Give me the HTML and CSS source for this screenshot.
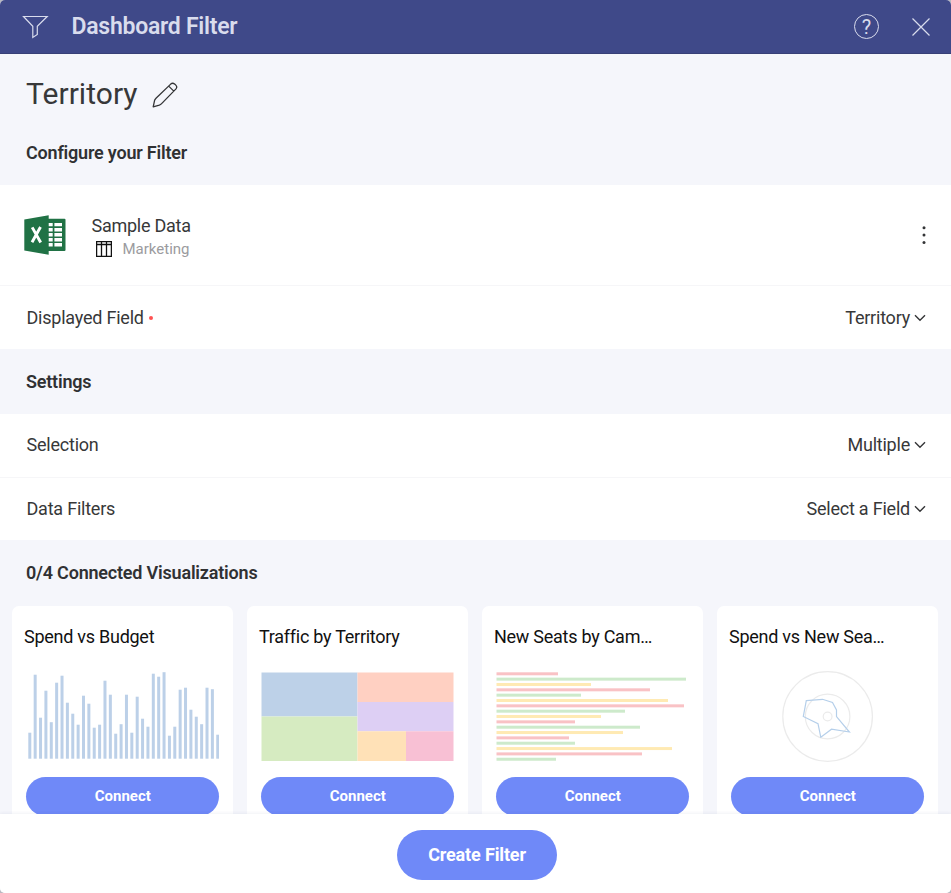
FILE: index.html
```html
<!DOCTYPE html>
<html lang="en">
<head>
<meta charset="utf-8">
<title>Dashboard Filter</title>
<link rel="stylesheet" href="styles.css">
</head>
<body>
<div class="dialog">
  <header class="topbar">
    <svg class="funnel" width="28" height="26" viewBox="0 0 28 26"><path d="M2.5 2.5H26.2L16.3 12.3V20.5L11.8 23.5V12.3Z"/></svg>
    <h1 class="topbar-title">Dashboard Filter</h1>
    <div class="help"><span class="help-mark">?</span></div>
    <svg class="close" width="20" height="20" viewBox="0 0 20 20"><path d="M1.5 1.5L18.5 18.5M18.5 1.5L1.5 18.5"/></svg>
  </header>

  <main class="content">
    <div class="name-row">
      <h2 class="filter-name">Territory</h2>
      <svg class="pencil" width="26" height="26" viewBox="0 0 26 26"><path d="M1.2 24.8L2.6 18.3Q3 17.2 4 16.2L18.7 2.1Q20.6 .4 22.9 2.2L23.8 3.1Q25.6 5 24 6.9L9.6 21.6Q8.6 22.7 7.3 23.1ZM16.7 4.1L21.8 9.1"/></svg>
    </div>
    <h3 class="section section-configure">Configure your Filter</h3>

    <div class="source">
      <svg class="excel" width="42" height="40" viewBox="0 0 42 40">
        <rect x="23" y="3.7" width="18.5" height="32.3" rx="1" fill="#207245"/>
        <path fill="#207245" d="M0.3 4.5L24.7.3V39.7L.3 35.5Z"/>
        <path fill="#fff" d="M24.7 8h4v3.3h-4zM30.4 8h7.6v3.3h-7.6zM24.7 13.1h4v3.3h-4zM30.4 13.1h7.6v3.3h-7.6zM24.7 18.1h4v3.3h-4zM30.4 18.1h7.6v3.3h-7.6zM24.7 23.1h4v3.3h-4zM30.4 23.1h7.6v3.3h-7.6zM24.7 28.1h4v3.3h-4zM30.4 28.1h7.6v3.3h-7.6z"/>
        <path fill="none" stroke="#fff" stroke-width="2.9" d="M8.2 12.4L16.7 27.5M16.5 12L8 27.3"/>
      </svg>
      <div class="source-text">
        <div class="source-name">Sample Data</div>
        <div class="source-sheet">
          <svg class="grid-icon" width="16" height="16" viewBox="0 0 16 16"><path d="M.6 .6H15.4V15.4H.6ZM.6 3.5H15.4M5.5 .6V15.3M10.5 .6V15.3"/></svg>
          <span>Marketing</span>
        </div>
      </div>
      <svg class="more" width="6" height="20" viewBox="0 0 6 20"><circle cx="3" cy="2.8" r="1.5"/><circle cx="3" cy="10.1" r="1.5"/><circle cx="3" cy="17.4" r="1.5"/></svg>
    </div>

    <div class="row">
      <span class="label">Displayed Field</span><i class="required"></i>
      <span class="value">Territory</span><svg class="chevron" width="12" height="8" viewBox="0 0 12 8"><path d="M1 1.3L6 6.2L11 1.3"/></svg>
    </div>
    <h3 class="section">Settings</h3>
    <div class="row">
      <span class="label">Selection</span>
      <span class="value">Multiple</span><svg class="chevron" width="12" height="8" viewBox="0 0 12 8"><path d="M1 1.3L6 6.2L11 1.3"/></svg>
    </div>
    <div class="row">
      <span class="label">Data Filters</span>
      <span class="value">Select a Field</span><svg class="chevron" width="12" height="8" viewBox="0 0 12 8"><path d="M1 1.3L6 6.2L11 1.3"/></svg>
    </div>
    <h3 class="section section-connected">0/4 Connected Visualizations</h3>

    <div class="cards">
      <article class="card">
        <h4 class="card-title">Spend vs Budget</h4>
        <svg class="preview" id="columns" width="193" height="92" viewBox="0 0 193 92"></svg>
        <button class="connect">Connect</button>
      </article>
      <article class="card">
        <h4 class="card-title">Traffic by Territory</h4>
        <svg class="preview" width="193" height="92" viewBox="0 0 193 92">
          <path fill="#bdd1e8" d="M.5 1.5h96v44h-96z"/>
          <path fill="#d6ebc1" d="M.5 45.5h96V90h-96z"/>
          <path fill="#ffd0c2" d="M96.5 1.5h96v29.5h-96z"/>
          <path fill="#ddcff4" d="M96.5 31h96v29.3h-96z"/>
          <path fill="#ffe1b7" d="M96.5 60.3h48.5V90H96.5z"/>
          <path fill="#f8c0d4" d="M145 60.3h47.5V90H145z"/>
        </svg>
        <button class="connect">Connect</button>
      </article>
      <article class="card">
        <h4 class="card-title">New Seats by Cam…</h4>
        <svg class="preview" id="bars" width="193" height="92" viewBox="0 0 193 92"></svg>
        <button class="connect">Connect</button>
      </article>
      <article class="card">
        <h4 class="card-title">Spend vs New Sea…</h4>
        <svg class="preview" width="193" height="92" viewBox="0 0 193 92">
          <g fill="none" stroke="#ebebeb" stroke-width="1.2"><circle cx="96.6" cy="45.5" r="44.8"/><circle cx="96.6" cy="45.5" r="22.3"/><circle cx="96.6" cy="45.5" r="4.4"/></g>
          <path fill="none" stroke="#b5cfea" stroke-width="1.2" d="M75.3 29.6L91.5 28.3L101.5 31.5L105.5 39L105.5 45.6L118.4 61L100.5 58.2L89.8 66.3L87 52.7L72.3 45.5Z"/>
        </svg>
        <button class="connect">Connect</button>
      </article>
    </div>
  </main>

  <footer class="footer"><button class="create">Create Filter</button></footer>
</div>
<script src="charts.js"></script>
</body>
</html>
```
FILE: styles.css
```css
* { box-sizing: border-box; }
html, body { margin: 0; height: 100%; background: #b9bac2; }
body { font-family: Roboto, "Liberation Sans", sans-serif; color: #373839; }
h1, h2, h3, h4 { margin: 0; }
button { border: 0; padding: 0; font-family: inherit; color: #fff; background: #6f89f8; font-weight: 700; }
svg { display: block; flex: none; }

.dialog { display: flex; flex-direction: column; width: 951px; height: 893px; overflow: hidden; border-radius: 5px; background: #f5f6fb; }

.topbar { display: flex; flex: none; align-items: center; height: 54px; padding: 0 20px 0 21px; background: #3f4989; border-bottom: 1px solid #384077; }
.funnel, .close { fill: none; stroke: #d9dced; stroke-width: 1.2; }
.funnel { margin-top: 1px; }
.topbar-title { margin-left: 22.5px; font-size: 23px; line-height: 28px; font-weight: 600; letter-spacing: -.26px; color: #d9dced; }
.help { display: flex; align-items: center; justify-content: center; width: 25px; height: 25px; margin-left: auto; border: 1.3px solid #d9dced; border-radius: 50%; color: #d9dced; font-size: 20px; line-height: 23px; }
.help-mark { padding-top: 2px; }
.close { margin-left: 32px; }

.content { flex: 1; min-height: 0; overflow: hidden; }
.name-row { display: flex; align-items: center; height: 80px; padding-left: 26px; }
.filter-name { font-size: 30px; font-weight: 400; line-height: 36px; letter-spacing: .04px; }
.pencil { margin: 1px 0 0 14.5px; fill: none; stroke: #343537; stroke-width: 1.3; stroke-linejoin: round; }
.section { display: flex; align-items: center; height: 65px; padding-left: 26px; color: #303133; font-size: 18px; line-height: 22px; font-weight: 600; letter-spacing: -.2px; }
.section-configure { height: 51px; padding-bottom: 14px; }
.section-connected { height: 66px; padding-bottom: 1px; }

.source { display: flex; align-items: center; height: 101px; padding: 0 24px; background: #fff; border-bottom: 1px solid #f6f6f8; }
.source-text { margin-left: 25.5px; }
.source-name { font-size: 18px; line-height: 24px; padding-top: 3px; letter-spacing: -.25px; }
.source-sheet { display: flex; align-items: center; height: 22px; padding-left: 4.5px; gap: 10.5px; color: #9b9b9e; font-size: 15px; }
.grid-icon { fill: none; stroke: #111; stroke-width: 1.3; }
.more { margin-left: auto; fill: #343537; }

.row { display: flex; align-items: center; height: 63px; padding: 0 25px 0 26.5px; background: #fff; font-size: 18px; line-height: 22px; letter-spacing: -.22px; }
.row + .row { border-top: 1px solid #f6f6f8; }
.section + .row { padding-bottom: 1px; }
.required { width: 4px; height: 4px; margin-left: 5px; border-radius: 50%; background: #ff5252; }
.value { margin-left: auto; }
.chevron { margin-left: 4px; fill: none; stroke: #343537; stroke-width: 1.4; }

.cards { display: grid; grid-template-columns: repeat(4, 220.5px); gap: 14.5px; padding-left: 12.3px; }
.card { height: 225px; padding: 18px 11.7px 0; border-radius: 7px; background: #fff; }
.card-title { height: 47px; font-size: 18px; line-height: 26px; font-weight: 400; letter-spacing: -.26px; color: #111; white-space: nowrap; }
.preview { margin-left: 2px; }
.connect { display: block; width: 193px; height: 39px; margin: 13.6px 0 0 2.3px; padding-bottom: 1px; border-radius: 20px; font-size: 15px; }

.footer { display: flex; flex: none; justify-content: center; align-items: center; height: 79px; padding: 2px 0 0 3px; background: #fff; box-shadow: 0 -1px 3px rgba(60, 70, 120, .07); position: relative; }
.create { width: 160px; height: 50px; border-radius: 25px; font-size: 18px; letter-spacing: -.15px; }
```
FILE: charts.js
```js
const NS = "http://www.w3.org/2000/svg";

function addRect(svg, x, y, width, height, fill) {
  const rect = document.createElementNS(NS, "rect");
  const attrs = { x, y, width, height, fill };
  for (const key in attrs) rect.setAttribute(key, attrs[key]);
  svg.appendChild(rect);
}

const columnHeights = [26, 84, 41, 68, 36.5, 76, 83, 56, 45, 34, 63, 55, 31, 34, 78, 64, 25, 34.5, 64, 26, 62, 40, 32, 85, 82, 86.5, 23, 32, 69, 71, 49, 42, 34.5, 71, 69.5, 24];
const columns = document.getElementById("columns");
columnHeights.forEach((h, i) => addRect(columns, 2.3 + i * 5.37, 87.7 - h, 3, h, "#bcd0e8"));

const barWidths = [62, 190, 95, 154, 85, 172, 188, 129, 105, 79, 144, 127, 73, 79, 176, 146, 60];
const barColors = ["#f9c2c5", "#cdeacb", "#ffeab3"];
const bars = document.getElementById("bars");
barWidths.forEach((w, i) => addRect(bars, 0.5, 1.3 + i * 5.34, w - 0.5, 3, barColors[i % 3]));
```
